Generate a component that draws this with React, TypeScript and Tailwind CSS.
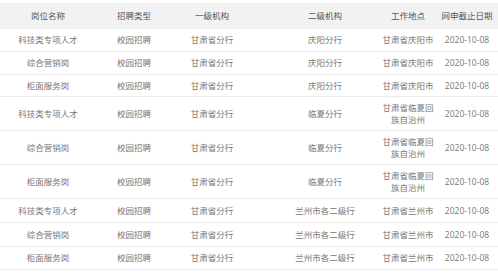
const HEAD = ["岗位名称", "招聘类型", "一级机构", "二级机构", "工作地点", "网申截止日期"];

type Row = { name: string; city: string; branch: string; place: string; h: string };

const ROWS: Row[] = [
  { name: "科技类专项人才", city: "甘肃省分行", branch: "庆阳分行", place: "甘肃省庆阳市", h: "h-[23px]" },
  { name: "综合营销岗", city: "甘肃省分行", branch: "庆阳分行", place: "甘肃省庆阳市", h: "h-[23px]" },
  { name: "柜面服务岗", city: "甘肃省分行", branch: "庆阳分行", place: "甘肃省庆阳市", h: "h-[22px]" },
  { name: "科技类专项人才", city: "甘肃省分行", branch: "临夏分行", place: "甘肃省临夏回族自治州", h: "h-[34px]" },
  { name: "综合营销岗", city: "甘肃省分行", branch: "临夏分行", place: "甘肃省临夏回族自治州", h: "h-[34px]" },
  { name: "柜面服务岗", city: "甘肃省分行", branch: "临夏分行", place: "甘肃省临夏回族自治州", h: "h-[34px]" },
  { name: "科技类专项人才", city: "甘肃省分行", branch: "兰州市各二级行", place: "甘肃省兰州市", h: "h-[24px]" },
  { name: "综合营销岗", city: "甘肃省分行", branch: "兰州市各二级行", place: "甘肃省兰州市", h: "h-[24px]" },
  { name: "柜面服务岗", city: "甘肃省分行", branch: "兰州市各二级行", place: "甘肃省兰州市", h: "h-[23px]" },
];

const COLS = "grid grid-cols-[96px_76px_80px_128px_56px_62px]";

export default function App() {
  return (
    <div
      className="w-[498px] h-[274px] overflow-hidden bg-white pt-[3px] text-[8.5px] leading-[12px] text-[#777]"
      style={{ fontFamily: '"Open Sans", "Noto Sans CJK SC", sans-serif' }}
    >
      <div className={`${COLS} h-[26px] items-center bg-[#f2f2f2] text-[#555]`}>
        {HEAD.map((t, i) => (
          <div key={t} className={`text-center ${i === 3 ? "pl-[18px]" : ""}`}>
            {t}
          </div>
        ))}
      </div>

      {ROWS.map((r, i) => (
        <div key={i} className={`${COLS} ${r.h} items-center border-b border-[#ececec]`}>
          <div className="text-center">{r.name}</div>
          <div className="text-center">校园招聘</div>
          <div className="text-center">{r.city}</div>
          <div className="text-center pl-[18px]">{r.branch}</div>
          <div className="text-center px-[1px]">{r.place}</div>
          <div className="text-center">2020-10-08</div>
        </div>
      ))}
    </div>
  );
}
